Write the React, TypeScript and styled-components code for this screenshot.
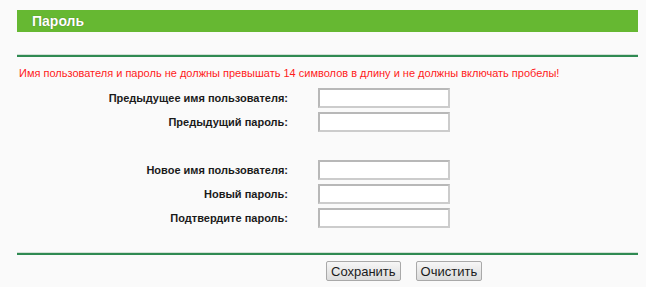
import { Fragment } from "react";
import styled, { createGlobalStyle } from "styled-components";

const GlobalStyle = createGlobalStyle`
  html, body {
    margin: 0;
    padding: 0;
    background: #fafafa;
  }

  body {
    font-family: "Liberation Sans", Arial, sans-serif;
  }
`;

const Page = styled.div`
  width: 621px;
  padding: 10px 0 0 17px;
`;

const Header = styled.div`
  height: 22px;
  background-color: #66b832;
  display: flex;
  align-items: center;
  padding-left: 15px;
  color: #ffffff;
  font-size: 14px;
  font-weight: bold;
  text-shadow: 0 0 1px #3d6b1c;
`;

const Rule = styled.div<{ $top: number }>`
  margin-top: ${(props) => props.$top}px;
  height: 2px;
  background-color: #2f8a52;
  border-top: 1px solid #d2e0d6;
`;

const Warning = styled.p`
  margin: 9px 0 0 2px;
  font-size: 11px;
  line-height: 14px;
  color: #ff1a1a;
`;

const Form = styled.div`
  margin-top: 6px;
  display: grid;
  grid-template-columns: 271px 132px;
  column-gap: 30px;
  grid-auto-rows: 24px;
  align-items: center;
`;

const Spacer = styled.div`
  grid-column: 1 / 3;
  height: 25px;
`;

const Label = styled.label`
  text-align: right;
  font-size: 11px;
  font-weight: bold;
  color: #1a1a1a;
`;

const Input = styled.input`
  box-sizing: border-box;
  width: 132px;
  height: 20px;
  margin: 0;
  background: #ffffff;
  border: 2px solid #cccccc;
  border-top-color: #b8b8b8;
  border-left-color: #b8b8b8;
  outline: none;
`;

const Buttons = styled.div`
  margin-top: 6px;
  padding-left: 309px;
  display: flex;
  gap: 15px;
`;

const Button = styled.button`
  box-sizing: border-box;
  height: 20px;
  padding: 0 4px;
  font-family: "Liberation Sans", Arial, sans-serif;
  font-size: 13px;
  color: #1a1a1a;
  background: linear-gradient(#f6f6f6, #dcdcdc);
  border: 1px solid #a9a9a9;
  border-radius: 2px;
`;

type Field = { label: string; type: string };

const oldFields: Field[] = [
  { label: "Предыдущее имя пользователя:", type: "text" },
  { label: "Предыдущий пароль:", type: "password" },
];

const newFields: Field[] = [
  { label: "Новое имя пользователя:", type: "text" },
  { label: "Новый пароль:", type: "password" },
  { label: "Подтвердите пароль:", type: "password" },
];

const renderFields = (fields: Field[]) =>
  fields.map((f) => (
    <Fragment key={f.label}>
      <Label>{f.label}</Label>
      <Input type={f.type} />
    </Fragment>
  ));

export default function App() {
  return (
    <>
      <GlobalStyle />
      <Page>
        <Header>Пароль</Header>
        <Rule $top={22} />
        <Warning>
          Имя пользователя и пароль не должны превышать 14 символов в длину и
          не должны включать пробелы!
        </Warning>

        <Form>
          {renderFields(oldFields)}
          <Spacer />
          {renderFields(newFields)}
        </Form>

        <Rule $top={22} />
        <Buttons>
          <Button>Сохранить</Button>
          <Button>Очистить</Button>
        </Buttons>
      </Page>
    </>
  );
}
